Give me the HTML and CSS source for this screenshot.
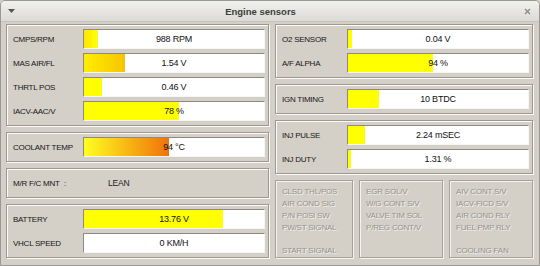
FILE: index.html
```html
<!DOCTYPE html>
<html lang="en">
<head>
  <meta charset="UTF-8" />
  <title>Engine sensors</title>
  <link rel="stylesheet" href="styles.css">
</head>
<body>
  <div class="window">
    <div class="titlebar">
      <svg class="menu-arrow" width="7" height="4" viewBox="0 0 7 4"><path d="M0 0 H7 L3.5 4 Z" fill="#555"/></svg>
      <span class="title">Engine sensors</span>
      <svg class="close" width="7" height="7" viewBox="0 0 7 7"><path d="M1 1 L6 6 M6 1 L1 6" stroke="#8a8a8a" stroke-width="1.3"/></svg>
    </div>

    <div class="content">
      <!-- left column -->
      <div class="col col-left">
        <div class="frame">
          <div class="row"><span class="label">CMPS/RPM</span><div class="bar"><div class="fill grad-rpm" style="width:14px"></div><span class="val">988 RPM</span></div></div>
          <div class="row"><span class="label">MAS AIR/FL</span><div class="bar"><div class="fill grad-air" style="width:41px"></div><span class="val">1.54 V</span></div></div>
          <div class="row"><span class="label">THRTL POS</span><div class="bar"><div class="fill" style="width:18px"></div><span class="val">0.46 V</span></div></div>
          <div class="row"><span class="label">IACV-AAC/V</span><div class="bar"><div class="fill" style="width:95px"></div><span class="val">78 %</span></div></div>
        </div>

        <div class="frame">
          <div class="row"><span class="label">COOLANT TEMP</span><div class="bar"><div class="fill grad-temp" style="width:85px"></div><span class="val">94 °C</span></div></div>
        </div>

        <div class="frame">
          <div class="row text-row">
            <span class="label">M/R F/C MNT</span><span class="colon">:</span><span class="state">LEAN</span>
          </div>
        </div>

        <div class="frame">
          <div class="row"><span class="label">BATTERY</span><div class="bar"><div class="fill" style="width:139px"></div><span class="val">13.76 V</span></div></div>
          <div class="row"><span class="label">VHCL SPEED</span><div class="bar"><div class="fill" style="width:0"></div><span class="val">0 KM/H</span></div></div>
        </div>
      </div>

      <!-- right column -->
      <div class="col col-right">
        <div class="frame">
          <div class="row"><span class="label">O2 SENSOR</span><div class="bar"><div class="fill" style="width:4px"></div><span class="val">0.04 V</span></div></div>
          <div class="row"><span class="label">A/F ALPHA</span><div class="bar"><div class="fill" style="width:85px"></div><span class="val">94 %</span></div></div>
        </div>

        <div class="frame">
          <div class="row"><span class="label">IGN TIMING</span><div class="bar"><div class="fill" style="width:31px"></div><span class="val">10 BTDC</span></div></div>
        </div>

        <div class="frame">
          <div class="row"><span class="label">INJ PULSE</span><div class="bar"><div class="fill" style="width:17px"></div><span class="val">2.24 mSEC</span></div></div>
          <div class="row"><span class="label">INJ DUTY</span><div class="bar"><div class="fill" style="width:3px"></div><span class="val">1.31 %</span></div></div>
        </div>

        <div class="switches">
          <div class="box box-narrow">
            <span>CLSD THL/POS</span>
            <span>AIR COND SIG</span>
            <span>P/N POSI SW</span>
            <span>PW/ST SIGNAL</span>
            <span class="gap"></span>
            <span>START SIGNAL</span>
          </div>
          <div class="box">
            <span>EGR SOL/V</span>
            <span>W/G CONT S/V</span>
            <span>VALVE TIM SOL</span>
            <span>P/REG CONT/V</span>
          </div>
          <div class="box">
            <span>AIV CONT S/V</span>
            <span>IACV-FICD S/V</span>
            <span>AIR COND RLY</span>
            <span>FUEL PMP RLY</span>
            <span class="gap"></span>
            <span>COOLING FAN</span>
          </div>
        </div>
      </div>
    </div>
  </div>
</body>
</html>
```

FILE: styles.css
```css
* {
  box-sizing: border-box;
}

body {
  margin: 0;
  background: #d4d0c8;
  font-family: 'Liberation Sans', Arial, sans-serif;
}

.window {
  width: 540px;
  height: 266px;
  border: 1px solid #9a9893;
  border-radius: 5px 5px 0 0;
  background: #d4d0c8;
  overflow: hidden;
}

.titlebar {
  height: 21px;
  display: flex;
  align-items: center;
  justify-content: space-between;
  padding: 0 8px 0 7px;
  background: linear-gradient(to bottom, #f0f0ee, #dcdbd6);
  border-bottom: 1px solid #c4c2bc;
}

.title {
  font-weight: bold;
  font-size: 9.5px;
  color: #3c3c3c;
  margin-right: 18px;
}

.content {
  display: flex;
  gap: 6px;
  padding: 2px 6px 0 5px;
}

.col {
  display: flex;
  flex-direction: column;
  gap: 6px;
}

.col-left {
  width: 263px;
}

.col-right {
  width: 258px;
}

.frame {
  border: 1px solid #9c988f;
  box-shadow: inset 1px 1px 0 #fbfbf9, 1px 1px 0 #fbfbf9;
  padding: 4px 3px 4px 5px;
  display: flex;
  flex-direction: column;
  gap: 4px;
}

.row {
  display: flex;
  align-items: center;
  height: 20px;
}

.label {
  flex: 1;
  font-size: 8px;
  letter-spacing: -0.25px;
  color: #161616;
  padding-left: 1px;
}

.bar {
  width: 182px;
  height: 20px;
  display: grid;
  background: #fff;
  border: 1px solid;
  border-color: #8d8a84 #f6f6f4 #f6f6f4 #8d8a84;
}

.fill, .val {
  grid-area: 1 / 1;
}

.fill {
  justify-self: start;
  height: 100%;
  background: #ffff00;
}

.grad-rpm {
  background: linear-gradient(to right, #ffe600, #ffff10);
}

.grad-air {
  background: linear-gradient(to right, #ffee00, #f6c400);
}

.grad-temp {
  background: linear-gradient(to right, #ffff20, #f07208);
}

.val {
  align-self: center;
  justify-self: center;
  font-size: 9px;
  letter-spacing: -0.2px;
  color: #111;
}

.text-row .label {
  flex: none;
  width: 52px;
}

.colon {
  font-size: 8px;
  color: #1c1c1c;
  width: 44px;
}

.state {
  font-size: 8.5px;
  color: #1c1c1c;
  letter-spacing: -0.2px;
}

.switches {
  display: flex;
  gap: 6px;
  height: 78px;
}

.box {
  flex: 1;
  display: flex;
  flex-direction: column;
  padding: 5px 0 0 6px;
  border: 1px solid #a5a198;
  box-shadow: inset 1px 1px 0 #f4f4f2, 1px 1px 0 #f4f4f2;
}

.box-narrow {
  flex: none;
  width: 78px;
}

.box span {
  height: 12px;
  line-height: 12px;
  font-size: 8px;
  letter-spacing: -0.2px;
  color: #96928a;
  text-shadow: 1px 1px 0 #f2f2f0;
  white-space: nowrap;
}
```
